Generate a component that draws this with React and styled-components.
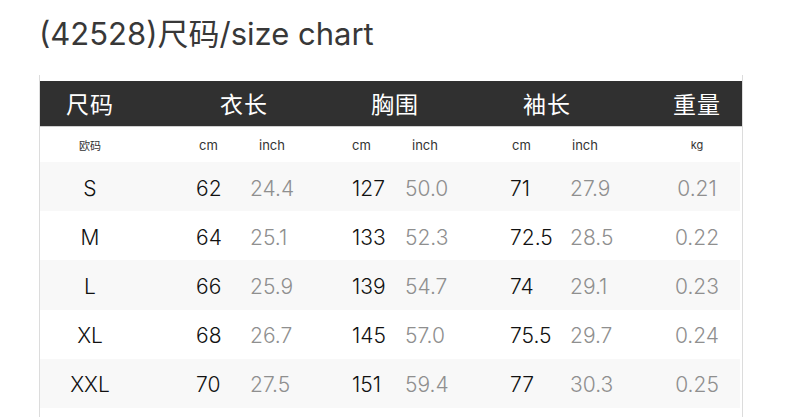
import React from "react";
import styled, { createGlobalStyle } from "styled-components";

const Global = createGlobalStyle`
  html, body { margin: 0; padding: 0; background: #fff; }
  body { font-family: Inter, "Noto Sans CJK SC", sans-serif; }
`;

const Page = styled.div`
  width: 790px;
  height: 417px;
  overflow: hidden;
  background: #fff;
`;

const Title = styled.h1`
  margin: 0;
  padding: 14px 0 0 39px;
  height: 75px;
  box-sizing: border-box;
  font-family: Inter, "Noto Sans CJK SC", sans-serif;
  font-weight: 400;
  font-size: 31px;
  line-height: 40px;
  color: #383838;
`;

const Table = styled.div`
  margin-left: 39px;
  width: 702px;
  border-left: 1px solid #dcdcdc;
  border-right: 1px solid #dcdcdc;
  padding-top: 6px;
  padding-bottom: 20px;
`;

const HeadRow = styled.div`
  display: grid;
  grid-template-columns: 100px 208px 94px 210px 90px;
  height: 45px;
  align-items: center;
  background: #303030;
  border-bottom: 1px solid #cfcfcf;
`;

const HeadCell = styled.div`
  text-align: center;
  color: #fff;
  font-family: "Noto Sans CJK SC", sans-serif;
  font-size: 23px;
  line-height: 45px;
  letter-spacing: 1px;
`;

const cols = "156px 54px 102px 53px 105px 60px 82px 90px";

const UnitRow = styled.div`
  display: grid;
  grid-template-columns: ${cols};
  height: 35px;
  align-items: center;
  background: #fff;
`;

const UnitCell = styled.div`
  font-family: Inter, "Noto Sans CJK SC", sans-serif;
  font-size: ${(p) => (p.$small ? "11px" : "13px")};
  color: #333;
  padding-left: ${(p) => p.$pl || 0}px;
  padding-right: ${(p) => p.$pr || 0}px;
  text-align: ${(p) => (p.$center ? "center" : "left")};
`;

const DataRow = styled.div`
  display: grid;
  grid-template-columns: ${cols};
  height: 49.2px;
  padding-top: 3px;
  box-sizing: border-box;
  align-items: center;
  background: ${(p) => (p.$striped ? "#f8f8f8" : "#fff")};
  margin-right: 2px;
`;

const SizeCell = styled.div`
  padding-right: 56px;
  text-align: center;
  font-size: 21px;
  font-weight: 350;
  color: #111;
`;

const Num = styled.div`
  font-size: 21px;
  font-weight: ${(p) => (p.$muted ? 300 : 350)};
  color: ${(p) => (p.$muted ? "#8f8f8f" : "#111")};
  text-align: ${(p) => (p.$center ? "center" : "left")};
`;

const rows = [
  ["S", "62", "24.4", "127", "50.0", "71", "27.9", "0.21"],
  ["M", "64", "25.1", "133", "52.3", "72.5", "28.5", "0.22"],
  ["L", "66", "25.9", "139", "54.7", "74", "29.1", "0.23"],
  ["XL", "68", "26.7", "145", "57.0", "75.5", "29.7", "0.24"],
  ["XXL", "70", "27.5", "151", "59.4", "77", "30.3", "0.25"],
];

export default function App() {
  return (
    <Page>
      <Global />
      <Title>(42528)尺码/size chart</Title>
      <Table>
        <HeadRow>
          <HeadCell>尺码</HeadCell>
          <HeadCell>衣长</HeadCell>
          <HeadCell>胸围</HeadCell>
          <HeadCell>袖长</HeadCell>
          <HeadCell>重量</HeadCell>
        </HeadRow>
        <UnitRow>
          <UnitCell $center $pr={56} $small>欧码</UnitCell>
          <UnitCell $pl={3}>cm</UnitCell>
          <UnitCell $pl={9}>inch</UnitCell>
          <UnitCell $pl={0}>cm</UnitCell>
          <UnitCell $pl={7}>inch</UnitCell>
          <UnitCell $pl={2}>cm</UnitCell>
          <UnitCell $pl={2}>inch</UnitCell>
          <UnitCell $center $small>kg</UnitCell>
        </UnitRow>
        {rows.map((r, i) => (
          <DataRow key={r[0]} $striped={i % 2 === 0}>
            <SizeCell>{r[0]}</SizeCell>
            <Num>{r[1]}</Num>
            <Num $muted>{r[2]}</Num>
            <Num>{r[3]}</Num>
            <Num $muted>{r[4]}</Num>
            <Num>{r[5]}</Num>
            <Num $muted>{r[6]}</Num>
            <Num $muted $center>{r[7]}</Num>
          </DataRow>
        ))}
      </Table>
    </Page>
  );
}
